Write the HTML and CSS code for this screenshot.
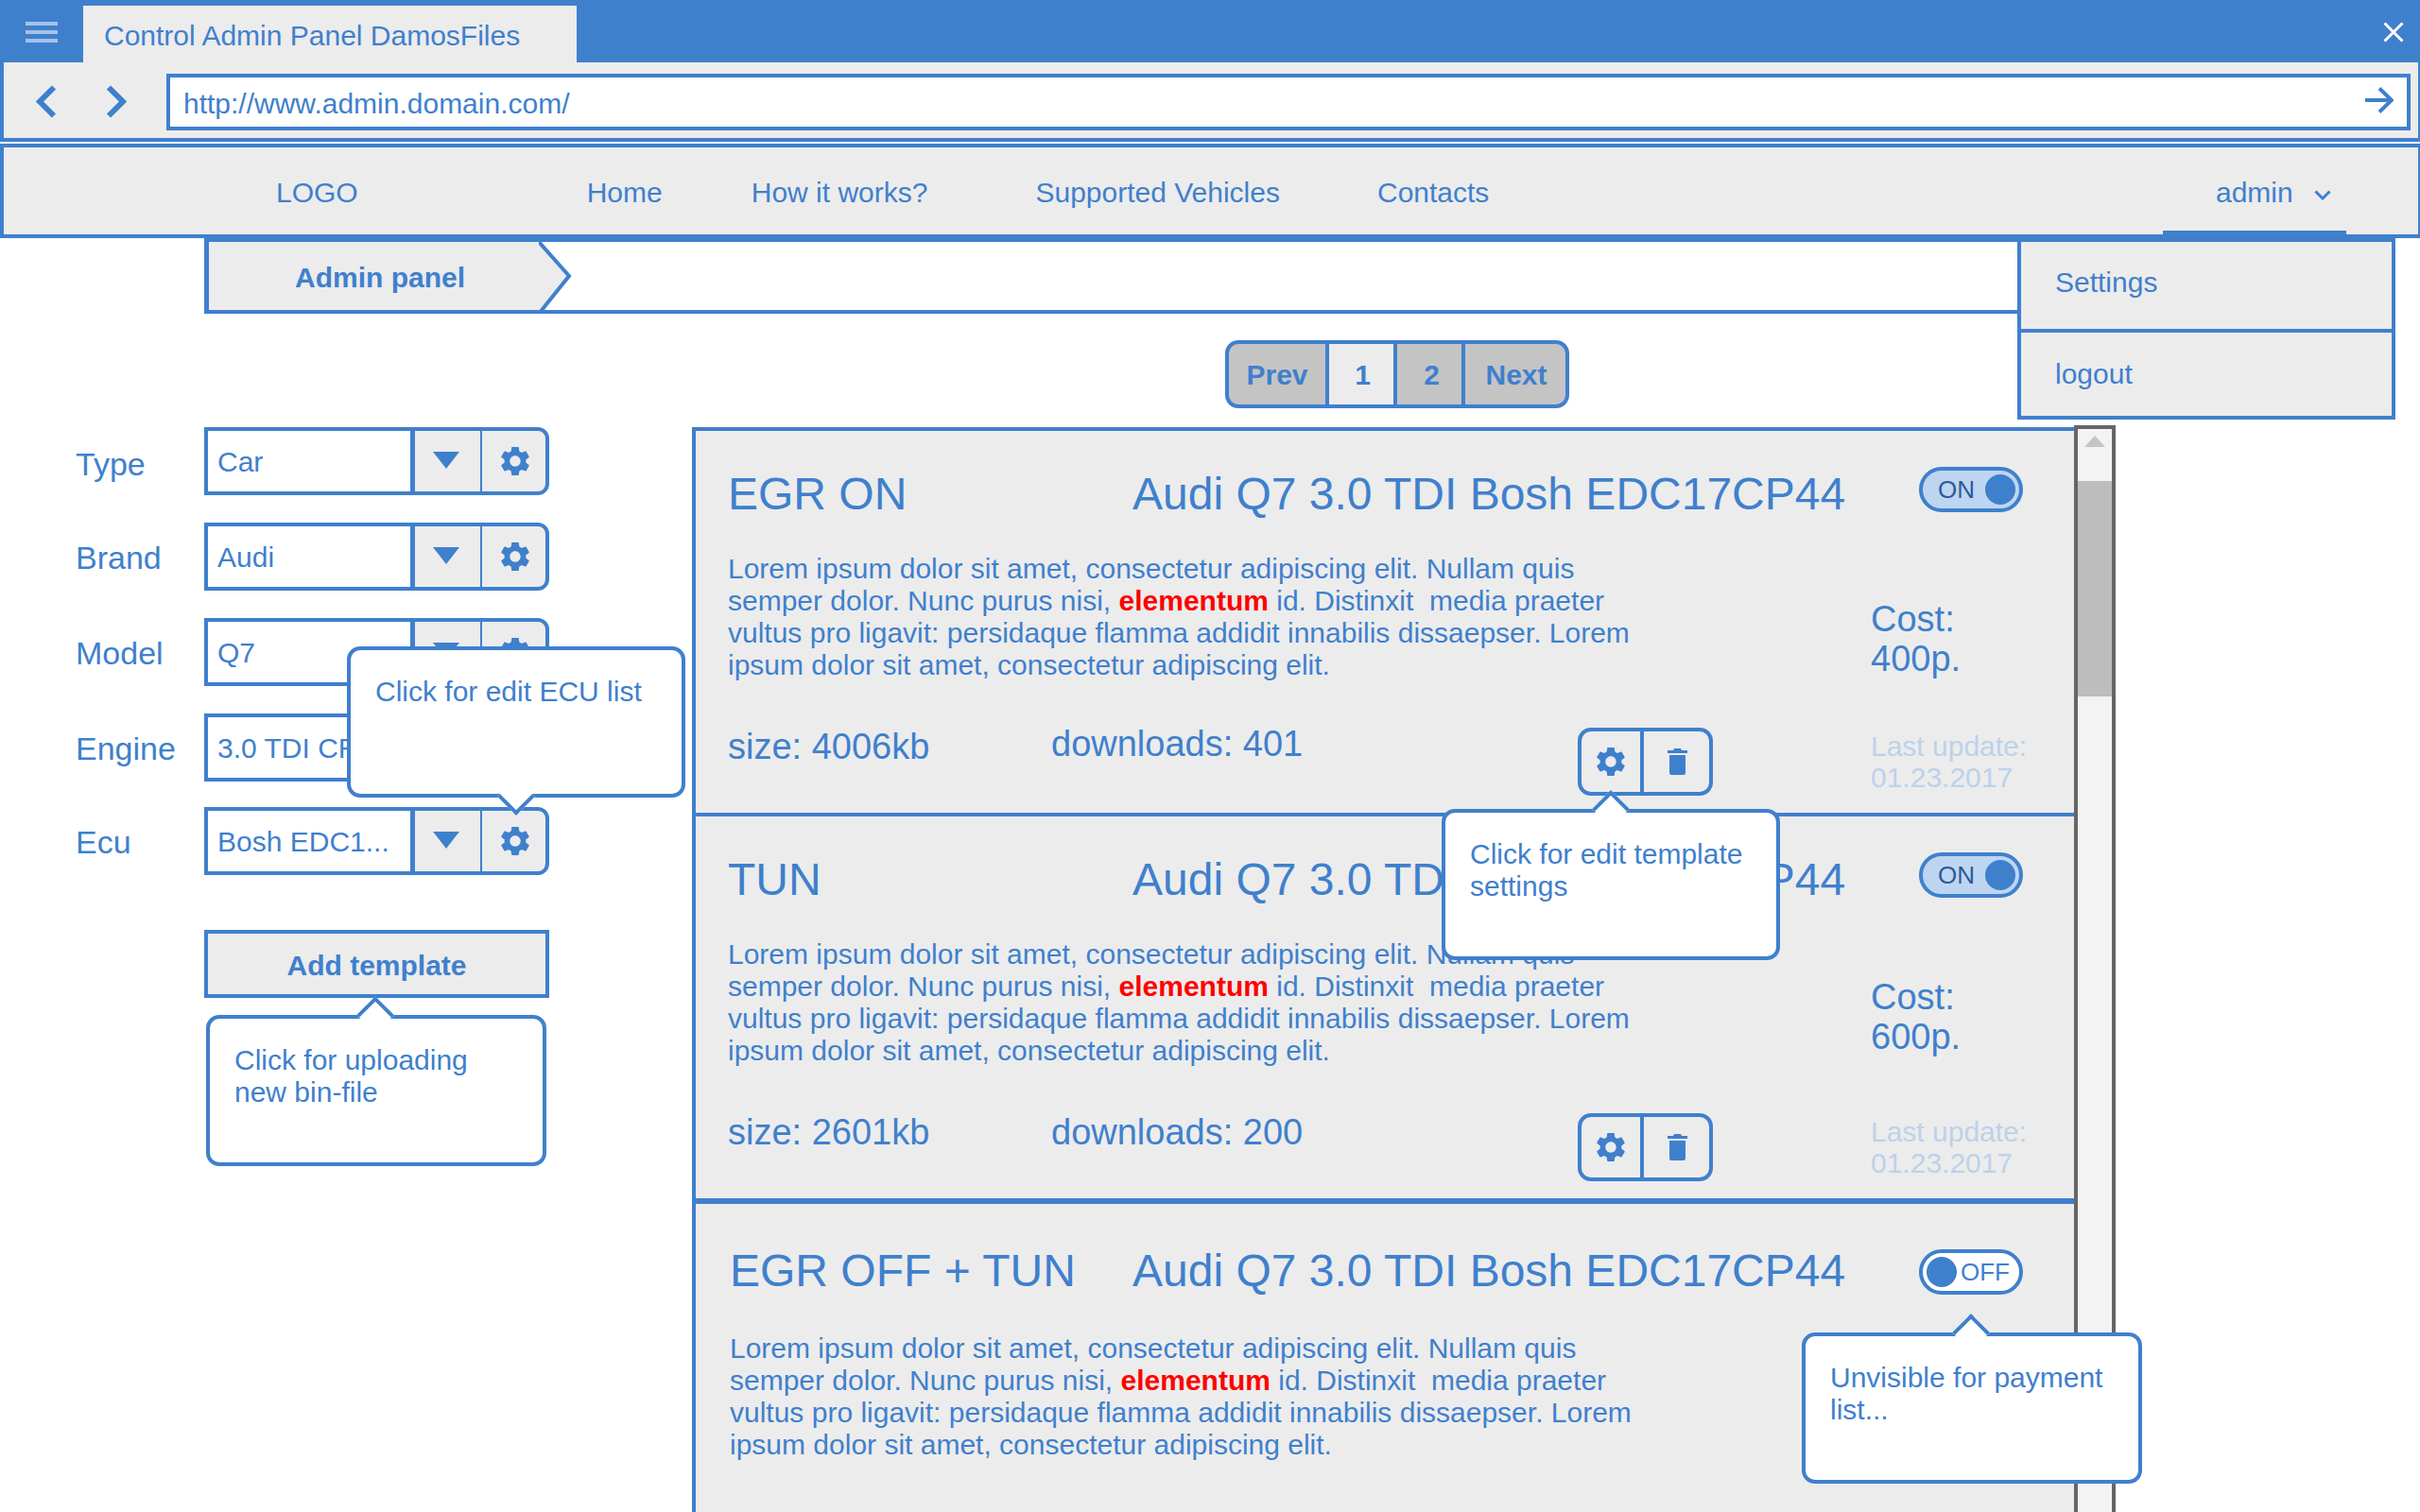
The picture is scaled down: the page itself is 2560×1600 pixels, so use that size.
FILE: index.html

```html
<!DOCTYPE html>
<html lang="en">
<head>
    <meta charset="UTF-8">
    <title>Control Admin Panel DamosFiles</title>
    <link rel="stylesheet" href="styles.css">
</head>
<body>
    <svg class="sprite" xmlns="http://www.w3.org/2000/svg">
        <symbol id="gear" viewBox="2.5 2.5 19 19">
            <path d="M19.14 12.94c.04-.3.06-.61.06-.94 0-.32-.02-.64-.07-.94l2.03-1.58c.18-.14.23-.41.12-.61l-1.92-3.32c-.12-.22-.37-.29-.59-.22l-2.39.96c-.5-.38-1.03-.7-1.62-.94l-.36-2.54c-.04-.24-.24-.41-.48-.41h-3.84c-.24 0-.43.17-.47.41l-.36 2.54c-.59.24-1.13.57-1.62.94l-2.39-.96c-.22-.08-.47 0-.59.22L2.74 8.87c-.12.21-.08.47.12.61l2.03 1.58c-.05.3-.09.63-.09.94s.02.64.07.94l-2.03 1.58c-.18.14-.23.41-.12.61l1.92 3.32c.12.22.37.29.59.22l2.39-.96c.5.38 1.03.7 1.62.94l.36 2.54c.05.24.24.41.48.41h3.84c.24 0 .44-.17.47-.41l.36-2.54c.59-.24 1.13-.56 1.62-.94l2.39.96c.22.08.47 0 .59-.22l1.92-3.32c.12-.22.07-.47-.12-.61l-2.01-1.58zM12 15.6c-1.98 0-3.6-1.62-3.6-3.6s1.62-3.6 3.6-3.6 3.6 1.62 3.6 3.6-1.62 3.6-3.6 3.6z"/>
        </symbol>
        <symbol id="trash" viewBox="0 0 21 28">
            <path d="M7 0h7l1 2h6v3H0V2h6zM2 7h17v19a2 2 0 0 1-2 2H4a2 2 0 0 1-2-2z"/>
        </symbol>
    </svg>

    <!-- Browser chrome -->
    <div class="titlebar">
        <svg class="burger" width="34" height="22" viewBox="0 0 34 22"><path d="M0 0h34v4H0zM0 9h34v4H0zM0 18h34v4H0z"/></svg>
        <div class="tab">Control Admin Panel DamosFiles</div>
        <svg class="close" width="22" height="22" viewBox="0 0 22 22"><path d="M1.5 1.5l19 19M20.5 1.5l-19 19"/></svg>
    </div>
    <div class="addressbar">
        <svg class="nav-arrow" width="22" height="35" viewBox="0 0 22 35"><path d="M19 2.5L4 17.5l15 15"/></svg>
        <svg class="nav-arrow forward" width="22" height="35" viewBox="0 0 22 35"><path d="M3 2.5l15 15-15 15"/></svg>
        <div class="url">
            <span>http://www.admin.domain.com/</span>
            <svg class="go" width="30" height="28" viewBox="0 0 30 28"><path d="M0 14h27M15 1.500l13 12.500-13 12.500"/></svg>
        </div>
    </div>

    <!-- Site navigation -->
    <nav class="topnav">
        <a class="logo">LOGO</a>
        <a class="home">Home</a>
        <a class="how">How it works?</a>
        <a class="vehicles">Supported Vehicles</a>
        <a class="contacts">Contacts</a>
        <div class="user">
            admin
            <svg width="18" height="11" viewBox="0 0 18 11"><path d="M1.500 1.500L9 9l7.500-7.500"/></svg>
        </div>
        <div class="user-menu">
            <div class="user-item first">Settings</div>
            <div class="user-item">logout</div>
        </div>
    </nav>

    <div class="crumbs">
        <div class="crumb">Admin panel</div>
        <svg class="crumb-tip" width="38" height="76" viewBox="0 0 38 76"><path class="fill" d="M0 0L32 36 0 76z"/><path class="line" d="M0 0L32 36 0 76"/></svg>
    </div>

    <div class="pager">
        <div class="page-btn prev">Prev</div>
        <div class="page-btn num active">1</div>
        <div class="page-btn num">2</div>
        <div class="page-btn next">Next</div>
    </div>

    <div class="content">
        <!-- Filters -->
        <div class="sidebar">
            <div class="filter">
                <label>Type</label>
                <div class="select">
                    <div class="value">Car</div>
                    <div class="drop"><i class="tri"></i></div>
                    <div class="cfg"><svg class="gear"><use href="#gear"/></svg></div>
                </div>
            </div>
            <div class="filter">
                <label>Brand</label>
                <div class="select">
                    <div class="value">Audi</div>
                    <div class="drop"><i class="tri"></i></div>
                    <div class="cfg"><svg class="gear"><use href="#gear"/></svg></div>
                </div>
            </div>
            <div class="filter">
                <label>Model</label>
                <div class="select">
                    <div class="value">Q7</div>
                    <div class="drop"><i class="tri"></i></div>
                    <div class="cfg"><svg class="gear"><use href="#gear"/></svg></div>
                </div>
            </div>
            <div class="filter">
                <label>Engine</label>
                <div class="select">
                    <div class="value">3.0 TDI CR</div>
                    <div class="drop"><i class="tri"></i></div>
                    <div class="cfg"><svg class="gear"><use href="#gear"/></svg></div>
                </div>
            </div>
            <div class="filter ecu">
                <label>Ecu</label>
                <div class="select">
                    <div class="value">Bosh EDC1...</div>
                    <div class="drop"><i class="tri"></i></div>
                    <div class="cfg"><svg class="gear"><use href="#gear"/></svg></div>
                </div>
            </div>
            <div class="add-btn">Add template</div>

            <div class="tip tip-down tip-ecu">Click for edit ECU list</div>
            <div class="tip tip-up tip-upload">Click for uploading<br>new bin-file</div>
        </div>

        <!-- Templates -->
        <div class="list">
            <div class="cards">
                <div class="card">
                    <div class="card-head">
                        <div class="card-name">EGR ON</div>
                        <div class="card-car">Audi Q7 3.0 TDI Bosh EDC17CP44</div>
                        <div class="toggle on"><span>ON</span><i></i></div>
                    </div>
                    <div class="card-body">
                        <p>Lorem ipsum dolor sit amet, consectetur adipiscing elit. Nullam quis<br>semper dolor. Nunc purus nisi, <b>elementum</b> id. Distinxit &nbsp;media praeter<br>vultus pro ligavit: persidaque flamma addidit innabilis dissaepser. Lorem<br>ipsum dolor sit amet, consectetur adipiscing elit.</p>
                        <div class="cost">Cost:<br>400p.</div>
                    </div>
                    <div class="card-foot">
                        <div class="size">size: 4006kb</div>
                        <div class="downloads raised">downloads: 401</div>
                        <div class="actions">
                            <div class="act first"><svg class="gear"><use href="#gear"/></svg></div>
                            <div class="act"><svg class="trash"><use href="#trash"/></svg></div>
                        </div>
                        <div class="updated">Last update:<br>01.23.2017</div>
                    </div>
                </div>

                <div class="card second">
                    <div class="card-head">
                        <div class="card-name">TUN</div>
                        <div class="card-car">Audi Q7 3.0 TDI Bosh EDC17CP44</div>
                        <div class="toggle on"><span>ON</span><i></i></div>
                    </div>
                    <div class="card-body">
                        <p>Lorem ipsum dolor sit amet, consectetur adipiscing elit. Nullam quis<br>semper dolor. Nunc purus nisi, <b>elementum</b> id. Distinxit &nbsp;media praeter<br>vultus pro ligavit: persidaque flamma addidit innabilis dissaepser. Lorem<br>ipsum dolor sit amet, consectetur adipiscing elit.</p>
                        <div class="cost">Cost:<br>600p.</div>
                    </div>
                    <div class="card-foot">
                        <div class="size">size: 2601kb</div>
                        <div class="downloads">downloads: 200</div>
                        <div class="actions">
                            <div class="act first"><svg class="gear"><use href="#gear"/></svg></div>
                            <div class="act"><svg class="trash"><use href="#trash"/></svg></div>
                        </div>
                        <div class="updated">Last update:<br>01.23.2017</div>
                    </div>
                </div>

                <div class="card third">
                    <div class="card-head">
                        <div class="card-name">EGR OFF + TUN</div>
                        <div class="card-car">Audi Q7 3.0 TDI Bosh EDC17CP44</div>
                        <div class="toggle off"><i></i><span>OFF</span></div>
                    </div>
                    <div class="card-body">
                        <p>Lorem ipsum dolor sit amet, consectetur adipiscing elit. Nullam quis<br>semper dolor. Nunc purus nisi, <b>elementum</b> id. Distinxit &nbsp;media praeter<br>vultus pro ligavit: persidaque flamma addidit innabilis dissaepser. Lorem<br>ipsum dolor sit amet, consectetur adipiscing elit.</p>
                    </div>
                </div>
            </div>

            <div class="scrollbar">
                <div class="scroll-up"><i></i></div>
                <div class="scroll-thumb"></div>
            </div>

            <div class="tip tip-up tip-edit">Click for edit template<br>settings</div>
            <div class="tip tip-up tip-hidden">Unvisible for payment<br>list...</div>
        </div>
    </div>
</body>
</html>
```

FILE: styles.css

```css
body {
    margin: 0;
    height: 1600px;
    overflow: hidden;
    background: #fff;
    color: #3f80cd;
    font-family: "Liberation Sans", Arial, sans-serif;
    font-size: 30px;
    line-height: 34px;
}
.sprite {
    display: none;
}

/* browser chrome */
.titlebar {
    display: flex;
    height: 66px;
    background: #3f80cd;
    position: relative;
}
.burger {
    margin: 23px 0 0 27px;
    fill: #a3c2ea;
}
.tab {
    margin: 6px 0 0 27px;
    width: 522px;
    padding-left: 22px;
    box-sizing: border-box;
    background: #ececec;
    line-height: 64px;
}
.close {
    margin: 23px 17px 0 auto;
    fill: none;
    stroke: #fff;
    stroke-width: 3;
}
.addressbar {
    display: flex;
    height: 84px;
    box-sizing: border-box;
    padding-top: 12px;
    background: #ececec;
    border: solid #3f80cd;
    border-width: 0 2px 4px 4px;
}
.nav-arrow {
    margin: 12px 0 0 34px;
    fill: none;
    stroke: #3f80cd;
    stroke-width: 6;
}
.nav-arrow.forward {
    margin-left: 52px;
}
.url {
    display: flex;
    align-items: center;
    justify-content: space-between;
    margin-left: 42px;
    width: 2374px;
    height: 60px;
    box-sizing: border-box;
    padding: 4px 14px 0 14px;
    background: #fff;
    border: 4px solid #3f80cd;
}
.go {
    margin-top: -8px;
    fill: none;
    stroke: #3f80cd;
    stroke-width: 4;
}

/* top nav */
.topnav {
    position: relative;
    z-index: 3;
    display: flex;
    align-items: center;
    height: 100px;
    margin-top: 2px;
    box-sizing: border-box;
    padding-top: 4px;
    background: #ececec;
    border: solid #3f80cd;
    border-width: 4px 2px 4px 4px;
}
.logo {
    margin-left: 288px;
}
.home {
    margin-left: 242px;
}
.how {
    margin-left: 94px;
}
.vehicles {
    margin-left: 114px;
}
.contacts {
    margin-left: 103px;
}
.user {
    display: flex;
    align-items: center;
    align-self: stretch;
    box-sizing: border-box;
    margin-left: auto;
    margin-right: 76px;
    width: 194px;
    padding: 4px 0 0 56px;
    border-bottom: 4px solid #3f80cd;
}
.user svg {
    margin: 4px 0 0 22px;
    fill: none;
    stroke: #3f80cd;
    stroke-width: 3;
}
.user-menu {
    position: absolute;
    left: 2130px;
    top: 96px;
    width: 400px;
    box-sizing: border-box;
    background: #ececec;
    border: 4px solid #3f80cd;
}
.user-item {
    display: flex;
    align-items: center;
    box-sizing: border-box;
    height: 88px;
    padding-left: 36px;
}
.user-item.first {
    height: 96px;
    padding-bottom: 6px;
    border-bottom: 4px solid #3f80cd;
}

/* breadcrumb */
.crumbs {
    display: flex;
    margin-left: 216px;
    width: 1924px;
    height: 80px;
    box-sizing: border-box;
    border: solid #3f80cd;
    border-width: 4px 0;
}
.crumb {
    width: 354px;
    box-sizing: border-box;
    padding-left: 91px;
    background: #ececec;
    border-left: 5px solid #3f80cd;
    font-weight: bold;
    line-height: 76px;
}
.crumb-tip .fill {
    fill: #ececec;
}
.crumb-tip .line {
    fill: none;
    stroke: #3f80cd;
    stroke-width: 4;
}

/* pagination */
.pager {
    display: flex;
    margin: 28px 0 0 1296px;
    width: 364px;
    height: 72px;
    box-sizing: border-box;
    border: 4px solid #3f80cd;
    border-radius: 14px;
    overflow: hidden;
    font-weight: bold;
    background: #c4c4c4;
}
.page-btn {
    text-align: center;
    line-height: 66px;
    border-left: 4px solid #3f80cd;
    width: 68px;
}
.page-btn.prev {
    border-left: 0;
    width: 102px;
}
.page-btn.next {
    width: 106px;
    text-indent: 2px;
}
.page-btn.num {
    text-indent: 3px;
}
.page-btn.num + .num {
    text-indent: 5px;
}
.page-btn.active {
    background: #ececec;
}

/* filters */
.content {
    display: flex;
    margin-top: 20px;
    padding-left: 80px;
}
.sidebar {
    position: relative;
    width: 652px;
    flex: none;
}
.filter {
    display: flex;
    align-items: center;
    height: 72px;
    margin-bottom: 29px;
}
.filter.ecu {
    margin-top: -2px;
}
.filter label {
    width: 136px;
    padding-top: 1px;
    font-size: 34px;
}
.filter:first-child label {
    padding-top: 6px;
}
.select {
    display: flex;
    width: 365px;
    height: 72px;
    box-sizing: border-box;
    border: 4px solid #3f80cd;
    border-radius: 0 12px 12px 0;
    background: #ececec;
}
.value {
    width: 219px;
    padding-left: 10px;
    box-sizing: border-box;
    background: #fff;
    border-right: 5px solid #3f80cd;
    line-height: 65px;
    white-space: nowrap;
    overflow: hidden;
}
.drop {
    display: flex;
    align-items: center;
    justify-content: center;
    width: 71px;
    box-sizing: border-box;
    padding-right: 4px;
    border-right: 2px solid #3f80cd;
}
.tri {
    width: 0;
    height: 0;
    margin-top: -2px;
    border: solid transparent;
    border-width: 18px 14px 0;
    border-top-color: #3f80cd;
}
.cfg {
    display: flex;
    flex: 1;
    align-items: center;
    justify-content: center;
    padding-left: 2px;
}
.gear {
    width: 30px;
    height: 30px;
    fill: #3f80cd;
}
.trash {
    width: 21px;
    height: 28px;
    fill: #3f80cd;
}
.add-btn {
    margin: 58px 0 0 136px;
    width: 365px;
    height: 72px;
    box-sizing: border-box;
    background: #ececec;
    border: 4px solid #3f80cd;
    font-weight: bold;
    text-align: center;
    line-height: 68px;
}

/* hint bubbles */
.tip {
    position: absolute;
    z-index: 2;
    width: 358px;
    height: 160px;
    box-sizing: border-box;
    padding: 27px 26px 0;
    background: #fff;
    border: 4px solid #3f80cd;
    border-radius: 14px;
}
.tip::after {
    content: '';
    position: absolute;
    width: 28px;
    height: 28px;
    box-sizing: border-box;
    background: #fff;
    border: solid #3f80cd;
    border-width: 4px 0 0 4px;
}
.tip-up::after {
    top: -18px;
    left: 161px;
    transform: rotate(45deg);
}
.tip-down::after {
    top: 141px;
    left: 161px;
    transform: rotate(225deg);
}
.tip-ecu {
    left: 287px;
    top: 232px;
}
.tip-upload {
    left: 138px;
    top: 622px;
    width: 360px;
}
.tip-edit {
    left: 789px;
    top: 400px;
}
.tip-hidden {
    left: 1170px;
    top: 954px;
    width: 360px;
}

/* template list */
.list {
    position: relative;
    display: flex;
    align-items: flex-start;
    border: solid #3f80cd;
    border-width: 4px 0 0 4px;
}
.cards {
    width: 1458px;
    background: #ececec;
}
.card {
    height: 408px;
    box-sizing: border-box;
    padding: 38px 0 0 34px;
    border-bottom: 4px solid #3f80cd;
}
.card.second {
    height: 410px;
    border-bottom-width: 6px;
}
.card.third {
    height: 800px;
    padding: 48px 0 0 36px;
    border-bottom: 0;
}
.card-head {
    display: flex;
    height: 48px;
    margin-bottom: 42px;
    white-space: nowrap;
}
.card-name, .card-car {
    font-size: 48px;
    line-height: 58px;
}
.card-name {
    width: 428px;
}
.card-car {
    width: 832px;
}
.third .card-name {
    width: 426px;
    margin-top: -6px;
}
.third .card-car {
    margin-top: -6px;
}
.third .card-head {
    margin-bottom: 39px;
}
.toggle {
    display: flex;
    align-items: center;
    width: 110px;
    height: 48px;
    box-sizing: border-box;
    border: 4px solid #3f80cd;
    border-radius: 24px;
    font-size: 26px;
}
.toggle i {
    width: 32px;
    height: 32px;
    border-radius: 50%;
    background: #3f80cd;
}
.toggle.on {
    justify-content: space-between;
    padding: 0 4px 0 16px;
    background: #bed5f2;
    color: #2c5a97;
}
.toggle.off {
    padding-left: 4px;
    gap: 4px;
    background: #fff;
}
.card-body {
    display: flex;
    height: 186px;
}
.card-body p {
    margin: 1px 0 0;
    width: 1209px;
    flex: none;
}
b {
    color: #f00;
}
.cost {
    margin-top: 50px;
    font-size: 38px;
    line-height: 42px;
}
.second .cost {
    margin-top: 42px;
}
.card-foot {
    display: flex;
    align-items: flex-start;
}
.size, .downloads {
    font-size: 38px;
    line-height: 40px;
}
.size {
    width: 342px;
}
.downloads {
    width: 557px;
}
.downloads.raised {
    margin-top: -3px;
}
.actions {
    display: flex;
    width: 143px;
    height: 72px;
    box-sizing: border-box;
    margin-right: 167px;
    border: 4px solid #3f80cd;
    border-radius: 14px;
}
.act {
    display: flex;
    align-items: center;
    justify-content: center;
    flex: 1;
}
.act.first {
    flex: none;
    width: 62px;
}
.act + .act {
    border-left: 4px solid #3f80cd;
    padding-left: 2px;
}
.updated {
    margin-top: 3px;
    line-height: 33px;
    color: #bcd2ea;
    white-space: nowrap;
}

/* fake scrollbar */
.scrollbar {
    width: 44px;
    height: 1200px;
    box-sizing: border-box;
    margin-top: -6px;
    background: #f3f3f3;
    border: 4px solid #666;
    border-bottom: 0;
}
.scroll-up {
    display: flex;
    justify-content: center;
    height: 55px;
    padding-top: 7px;
    box-sizing: border-box;
}
.scroll-up i {
    width: 0;
    height: 0;
    border: solid transparent;
    border-width: 0 11px 12px;
    border-bottom-color: #c4c4c4;
}
.scroll-thumb {
    height: 228px;
    background: #bdbdbd;
}
```
